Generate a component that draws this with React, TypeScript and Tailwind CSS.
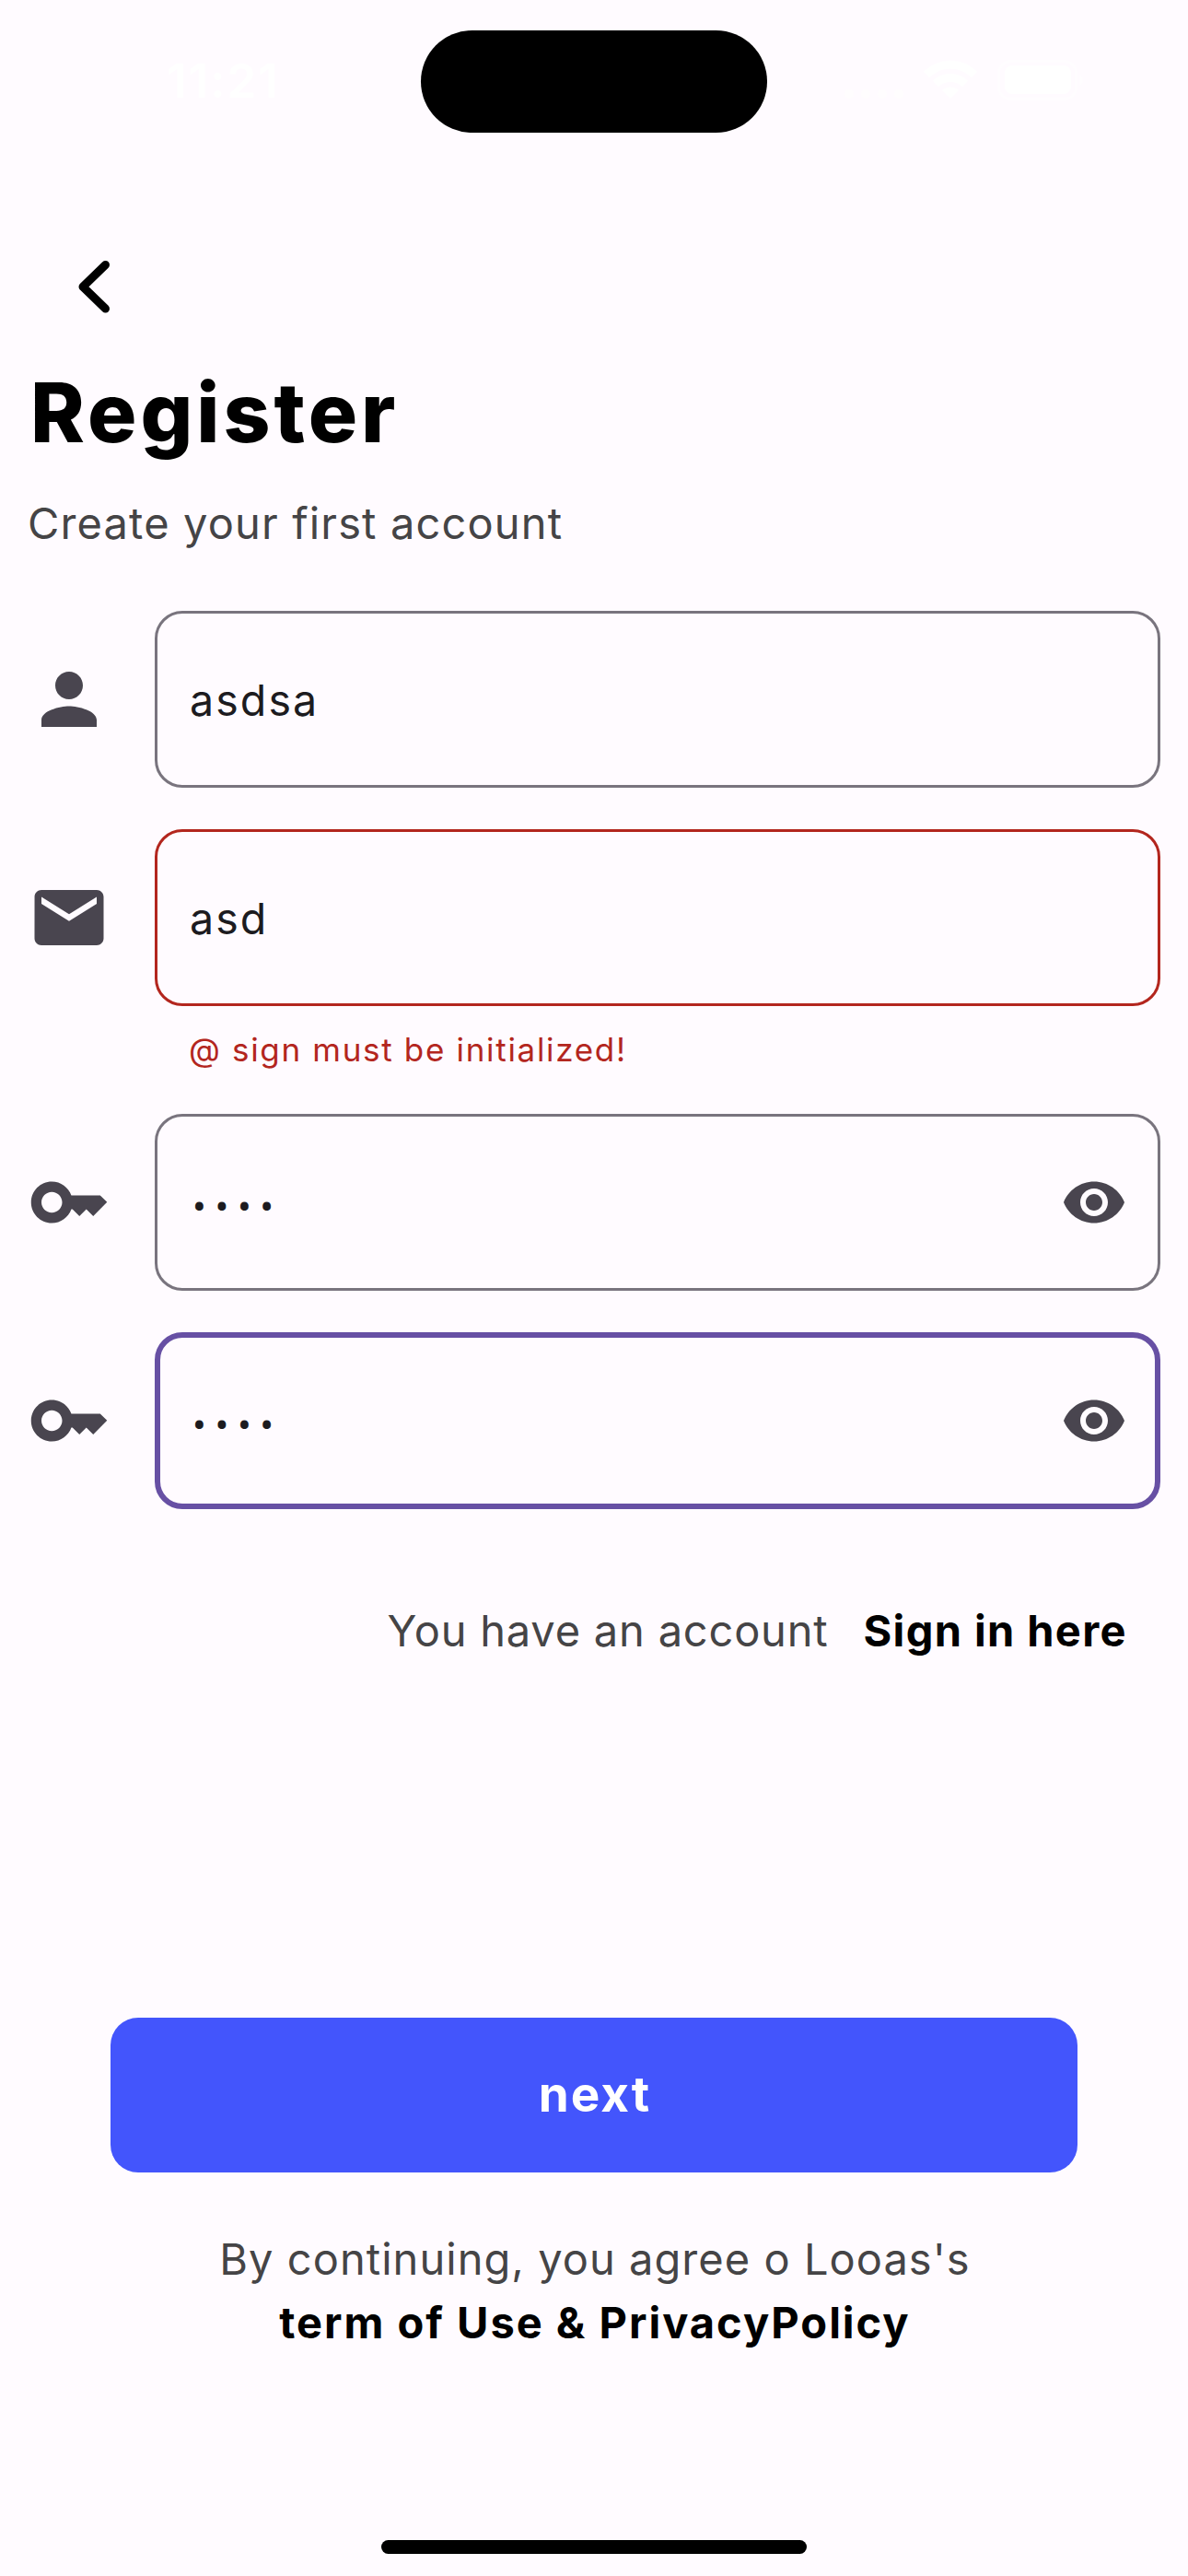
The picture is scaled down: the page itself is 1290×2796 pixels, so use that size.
import type { ReactNode } from "react";

const PERSON =
  "M12 12c2.21 0 4-1.79 4-4s-1.79-4-4-4-4 1.79-4 4 1.79 4 4 4zm0 2c-2.67 0-8 1.34-8 4v2h16v-2c0-2.66-5.33-4-8-4z";
const MAIL =
  "M20 4H4c-1.1 0-1.99.9-1.99 2L2 18c0 1.1.9 2 2 2h16c1.1 0 2-.9 2-2V6c0-1.1-.9-2-2-2zm0 4l-8 5-8-5V6l8 5 8-5v2z";
const KEY =
  "M21 10h-8.35C11.83 7.67 9.61 6 7 6c-3.31 0-6 2.69-6 6s2.69 6 6 6c2.61 0 4.83-1.67 5.65-4H13l2 2 2-2 2 2 4-4.04L21 10zM7 15c-1.65 0-3-1.35-3-3s1.35-3 3-3 3 1.35 3 3-1.35 3-3 3z";
const EYE =
  "M12 4.5C7 4.5 2.73 7.61 1 12c1.73 4.39 6 7.5 11 7.5s9.27-3.11 11-7.5c-1.73-4.39-6-7.5-11-7.5zM12 17c-2.76 0-5-2.24-5-5s2.24-5 5-5 5 2.24 5 5-2.24 5-5 5zm0-8c-1.66 0-3 1.34-3 3s1.34 3 3 3 3-1.34 3-3-1.34-3-3-3z";

function Icon({ path, className }: { path: string; className: string }) {
  return (
    <svg viewBox="0 0 24 24" className={`shrink-0 fill-[#49454f] ${className}`}>
      <path d={path} />
    </svg>
  );
}

function StatusBar() {
  return (
    <header className="flex h-[144px] items-start pt-[33px]">
      <div className="flex w-[457px] justify-start pt-[25px] pl-[181px] text-[51px] leading-[60px] font-semibold tracking-[2px] text-white">
        11:21
      </div>
      <div className="h-[111px] w-[376px] rounded-full bg-black" />
      <svg width="280" height="60" viewBox="900 50 280 60" className="mt-[17px] ml-[67px]">
        <g fill="#fffdfe">
          <circle cx="922" cy="102" r="5" />
          <circle cx="940" cy="102" r="5" />
          <circle cx="958" cy="102" r="5" />
          <circle cx="976" cy="102" r="5" />
        </g>
        <g fill="none" stroke="#ffffff" strokeWidth="9">
          <path d="M1006 81a37 37 0 0 1 52 0" />
          <path d="M1016 91a23 23 0 0 1 32 0" />
        </g>
        <path d="M1032 107l-9-9a13 13 0 0 1 18 0z" fill="#ffffff" />
        <rect x="1084.500" y="66.500" width="84" height="41" rx="13" fill="none" stroke="#fffdff" strokeWidth="3" />
        <rect x="1091" y="71" width="72" height="31" rx="8" fill="#ffffff" />
        <path d="M1172 81c5 2 5 10 0 12z" fill="#fffdff" />
      </svg>
    </header>
  );
}

function Field({
  icon,
  variant,
  error,
  secret,
  children,
}: {
  icon: string;
  variant: "idle" | "error" | "focus";
  error?: string;
  secret?: boolean;
  children: ReactNode;
}) {
  const frame = {
    idle: "border-[3px] border-[#79747e] pr-[33px] pl-[35px]",
    error: "border-[3px] border-[#b3261e] pr-[33px] pl-[35px]",
    focus: "border-[6px] border-[#6750a4] pr-[30px] pl-[32px]",
  }[variant];
  return (
    <div className="flex gap-12">
      <div className="flex h-48 items-center">
        <Icon path={icon} className="size-[90px]" />
      </div>
      <div className="flex-1">
        <div className={`flex h-48 items-center justify-between rounded-[30px] ${frame}`}>
          {secret ? (
            <span className="pt-[12px] pl-[3px] font-[Roboto] text-[44px] leading-[60px] tracking-[9.6px] text-[#1c1b1f]">
              {children}
            </span>
          ) : (
            <span className="pt-[2px] text-[46.5px] leading-[60px] tracking-[2.1px] text-[#1c1b1f]">
              {children}
            </span>
          )}
          {secret && <Icon path={EYE} className="size-[72px]" />}
        </div>
        {error && (
          <p className="mt-[23px] mb-px pl-[37px] text-[35px] leading-[48px] tracking-[1.68px] text-[#b3261e]">
            {error}
          </p>
        )}
      </div>
    </div>
  );
}

export default function App() {
  return (
    <div className="flex h-[2796px] w-[1290px] flex-col overflow-hidden bg-[#fffbff] font-[Inter,sans-serif] text-black">
      <StatusBar />
      <button className="mt-[132px] ml-[66px] flex size-[72px] items-center justify-center">
        <svg width="72" height="72" viewBox="66 276 72 72" fill="none" stroke="#000000">
          <path d="M114.500 287.500 90 311.300 114.500 335" strokeWidth="9" strokeLinecap="round" strokeLinejoin="round" />
        </svg>
      </button>
      <h1 className="mt-12 pl-[33px] text-[89px] leading-[104px] font-extrabold tracking-[4px]">Register</h1>
      <p className="mt-[38px] pl-[30px] text-[47px] leading-[60px] tracking-[1.15px] text-[#454446]">
        Create your first account
      </p>

      <main className="mt-[65px] flex flex-col gap-[45px] px-[30px]">
        <Field icon={PERSON} variant="idle">asdsa</Field>
        <Field icon={MAIL} variant="error" error="@ sign must be initialized!">asd</Field>
        <Field icon={KEY} variant="idle" secret>••••</Field>
        <Field icon={KEY} variant="focus" secret>••••</Field>
      </main>

      <div className="mt-[102px] flex justify-end gap-[38px] pr-[66px] text-[47px] leading-[60px]">
        <span className="tracking-[0.8px] text-[#454446]">You have an account</span>
        <span className="font-bold tracking-[1.38px]">Sign in here</span>
      </div>

      <button className="mx-[120px] mt-[390px] h-[168px] rounded-[30px] bg-[#4355fc] pb-[2px] pl-[2px] text-[53px] leading-[166px] font-bold tracking-[2px] text-white">
        next
      </button>
      <div className="mt-[59px] text-center text-[47px] leading-[69px]">
        <p className="pl-[2px] tracking-[1.04px] text-[#454446]">By continuing, you agree o Looas's</p>
        <p className="pl-[2px] font-bold tracking-[1.98px]">term of Use &amp; PrivacyPolicy</p>
      </div>
      <div className="mt-auto mb-6 h-[15px] w-[462px] self-center rounded-full bg-black" />
    </div>
  );
}
